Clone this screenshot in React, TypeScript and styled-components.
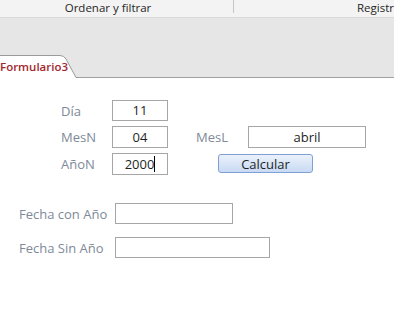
import React from 'react';
import styled, {createGlobalStyle} from 'styled-components';

const GlobalStyle = createGlobalStyle`
  html, body {
    margin: 0;
    padding: 0;
    background: #ffffff;
  }
  body {
    font-family: "Open Sans", "Noto Sans", sans-serif;
    width: 394px;
    height: 321px;
    overflow: hidden;
  }
`

const Ribbon = styled.div`
  height: 17px;
  background: #f3f3f3;
  border-bottom: 1px solid #dadada;
  display: flex;
  align-items: flex-start;
  font-size: 11.5px;
  color: #262626;
  white-space: nowrap;
  overflow: hidden;
`

const RibbonGroup = styled.div`
  width: 216px;
  padding-right: 17px;
  flex-shrink: 0;
  height: 13px;
  line-height: 15px;
  text-align: center;
  border-right: 1px solid #c6c6c6;
`

const RibbonLabel = styled.div`
  padding-left: 123px;
  line-height: 15px;
`

const Band = styled.div`
  height: 36px;
  background: #e6e6e6;
`

const TabStrip = styled.div`
  height: 23px;
  background: #e6e6e6;
  display: flex;
  align-items: flex-end;
  border-bottom: 1px solid #a0a0a0;
`

const Tab = styled.div`
  position: relative;
  width: 78px;
  height: 23px;
  margin-bottom: -1px;
  font-size: 11.5px;
  font-weight: 600;
  color: #a4262c;
  line-height: 24px;
  z-index: 1;
`

const TabShape = styled.svg`
  position: absolute;
  inset: 0;
  z-index: -1;
`

const FormBody = styled.div`
  padding-top: 22px;
  font-size: 13px;
  color: #7e8999;
`

const TopGrid = styled.div`
  display: grid;
  grid-template-columns: 51px 56px 28px 52px 118px;
  grid-template-rows: 21px 22px 22px;
  row-gap: 5px;
  padding-left: 61px;
  align-items: center;
`

const Label = styled.div`
  line-height: 18px;
  white-space: nowrap;
`

const Box = styled.div<{ $w?: number }>`
  box-sizing: border-box;
  width: ${p => (p.$w ? `${p.$w}px` : '100%')};
  height: 100%;
  border: 1px solid #a6a6a6;
  background: #ffffff;
  color: #1f1f1f;
  font-size: 13px;
  display: flex;
  align-items: center;
  justify-content: center;
  line-height: 1;
`

const Caret = styled.span`
  display: inline-block;
  width: 1px;
  height: 16px;
  background: #000;
`

const CalcButton = styled.button`
  grid-column: 4 / span 2;
  margin-left: 22px;
  width: 95px;
  height: 19px;
  box-sizing: border-box;
  border: 1px solid #7ea0d6;
  border-radius: 3px;
  background: linear-gradient(#eaf1fb, #c9daf4);
  font-family: "Open Sans", "Noto Sans", sans-serif;
  font-size: 13px;
  color: #1f1f1f;
  padding: 0;
  line-height: 16px;
  align-self: start;
  margin-top: 1px;
`

const DateBlock = styled.div`
  margin-top: 28px;
  padding-left: 19px;
  display: flex;
  flex-direction: column;
  gap: 13px;
`

const DateRow = styled.div`
  display: grid;
  grid-template-columns: 96px auto;
  height: 21px;
  align-items: center;
`

function App() {
    return (
        <>
            <GlobalStyle/>
            <Ribbon>
                <RibbonGroup>Ordenar y filtrar</RibbonGroup>
                <RibbonLabel>Registr</RibbonLabel>
            </Ribbon>
            <Band/>
            <TabStrip>
                <Tab>
                    <TabShape width="78" height="23" viewBox="0 0 78 23">
                        <path d="M0 0.5 H60 Q64 0.5 66 4 L76 22.5 H78 V23 H0 Z" fill="#ffffff"/>
                        <path d="M0 0.5 H60 Q64 0.5 66 4 L76 22.5 H78" fill="none" stroke="#9a9a9a" strokeWidth="1"/>
                    </TabShape>
                    Formulario3
                </Tab>
            </TabStrip>
            <FormBody>
                <TopGrid>
                    <Label>Día</Label>
                    <Box>11</Box>
                    <span/>
                    <span/>
                    <span/>

                    <Label>MesN</Label>
                    <Box>04</Box>
                    <span/>
                    <Label>MesL</Label>
                    <Box>abril</Box>

                    <Label>AñoN</Label>
                    <Box>2000<Caret/></Box>
                    <span/>
                    <CalcButton>Calcular</CalcButton>
                </TopGrid>
                <DateBlock>
                    <DateRow>
                        <Label>Fecha con Año</Label>
                        <Box $w={118}/>
                    </DateRow>
                    <DateRow>
                        <Label>Fecha Sin Año</Label>
                        <Box $w={155}/>
                    </DateRow>
                </DateBlock>
            </FormBody>
        </>
    );
}

export default App;
